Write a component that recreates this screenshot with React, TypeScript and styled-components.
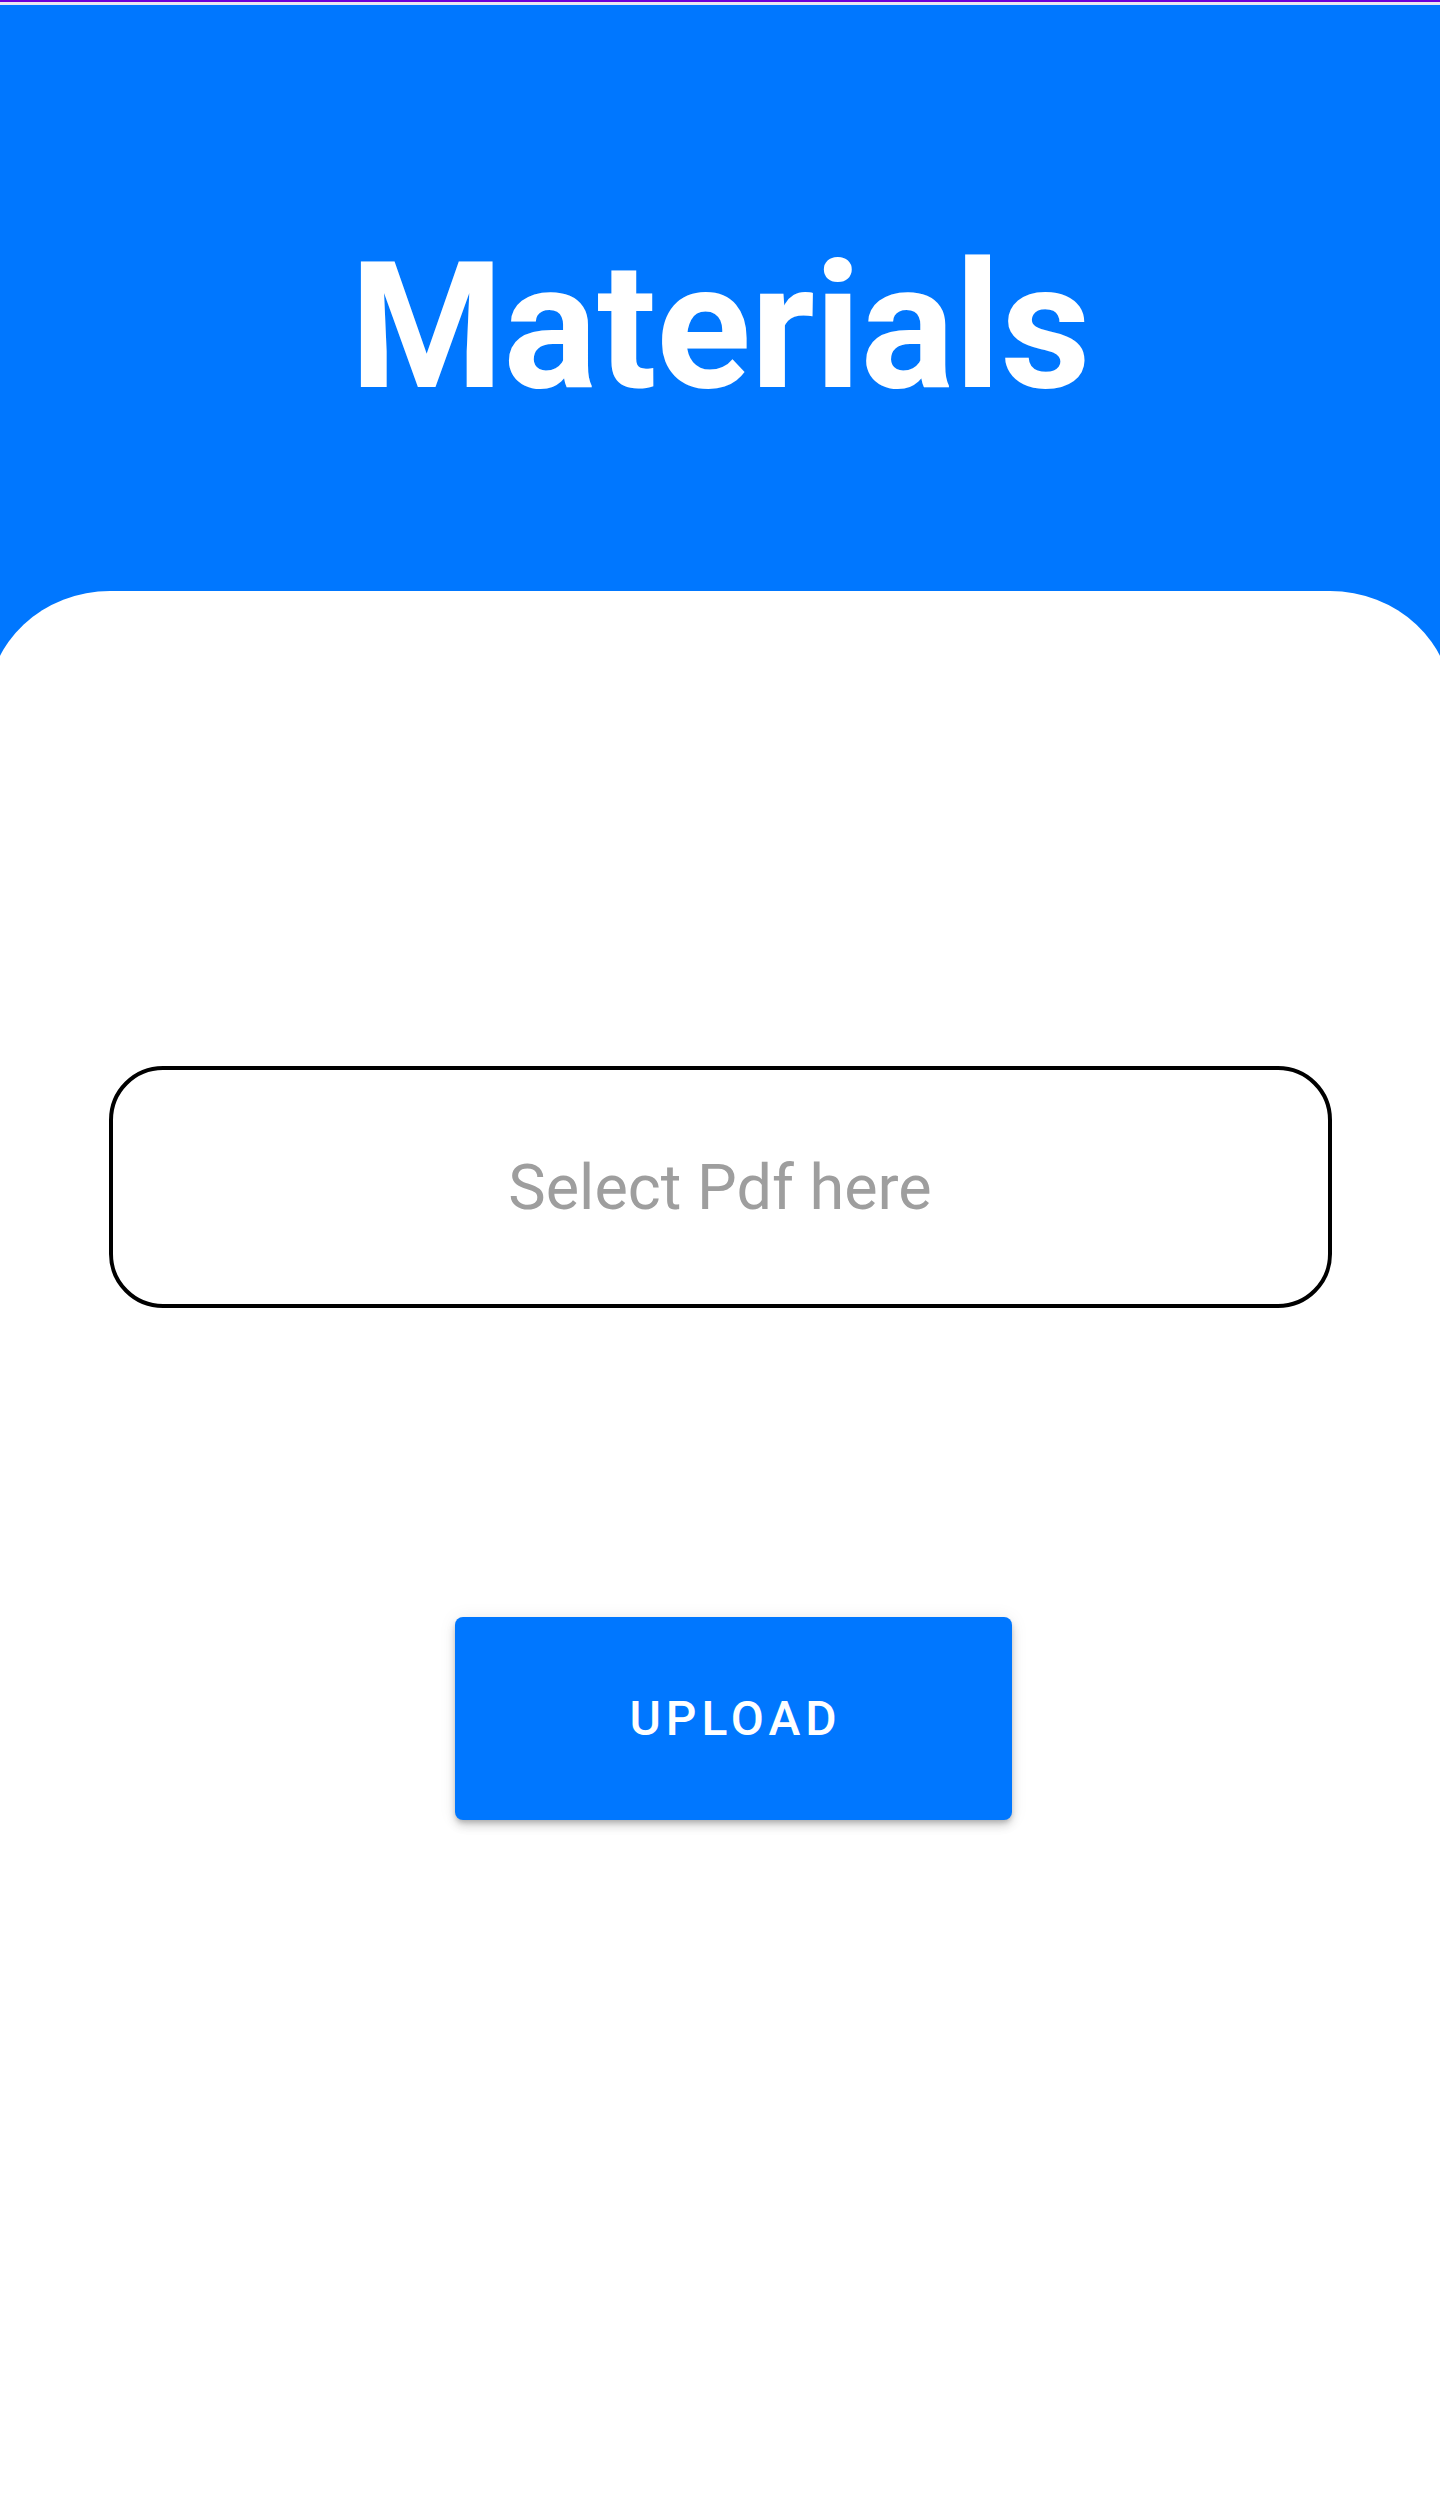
import React from "react";
import styled, { createGlobalStyle } from "styled-components";

const GlobalStyle = createGlobalStyle`
	html, body {
		margin: 0;
		padding: 0;
		background: #ffffff;
	}
	body {
		font-family: Roboto, "Noto Sans", Arial, sans-serif;
	}
`;

export default function App() {
	return (
		<Main className="MaterialsPage">
			<GlobalStyle />
			<StatusStrip />
			<Header>
				<Title>Materials</Title>
			</Header>
			<Panel>
				<PdfPicker>Select Pdf here</PdfPicker>
				<UploadButton type="button">UPLOAD</UploadButton>
			</Panel>
		</Main>
	);
}

//////////////////////////////////////////////////////////////////////////////////////////

const Main = styled.div`
	display: flex;
	flex-direction: column;
	min-height: 2501px;
	background: #0077ff;
	overflow: hidden;
`;

const StatusStrip = styled.div`
	height: 2px;
	background: #6a00d8;
	border-bottom: 3px solid #e9e7f1;
`;

const Header = styled.header`
	height: 586px;
	box-sizing: border-box;
	padding-top: 234px;
	display: flex;
	justify-content: center;
`;

const Title = styled.h1`
	margin: 0;
	font-family: Roboto, "Noto Sans", sans-serif;
	font-weight: 700;
	font-size: 176px;
	line-height: 1;
	color: #ffffff;
	letter-spacing: -0.5px;
`;

const Panel = styled.main`
	flex: 1;
	margin: 0 -12px;
	background: #ffffff;
	border-radius: 122px 122px 0 0 / 114px 114px 0 0;
	display: flex;
	flex-direction: column;
	align-items: center;
	padding-top: 475px;
`;

const PdfPicker = styled.div`
	width: 1223px;
	height: 242px;
	box-sizing: border-box;
	border: 4px solid #000000;
	border-radius: 54px;
	display: flex;
	align-items: center;
	justify-content: center;
	font-family: Roboto, "Noto Sans", sans-serif;
	font-size: 63px;
	color: #9e9e9e;
	cursor: pointer;
`;

const UploadButton = styled.button`
	margin-top: 309px;
	margin-left: 26px;
	width: 557px;
	height: 203px;
	border: none;
	border-radius: 8px;
	background: #0077ff;
	color: #ffffff;
	font-family: Roboto, "Noto Sans", sans-serif;
	font-weight: 500;
	font-size: 48px;
	letter-spacing: 5px;
	padding: 0 0 0 5px;
	box-shadow: 0 3px 5px -1px rgba(0, 0, 0, 0.2), 0 6px 10px 0 rgba(0, 0, 0, 0.14), 0 1px 18px 0 rgba(0, 0, 0, 0.08);
	cursor: pointer;
`;

////////////////////////////////////////////////////////////////////////////////////
